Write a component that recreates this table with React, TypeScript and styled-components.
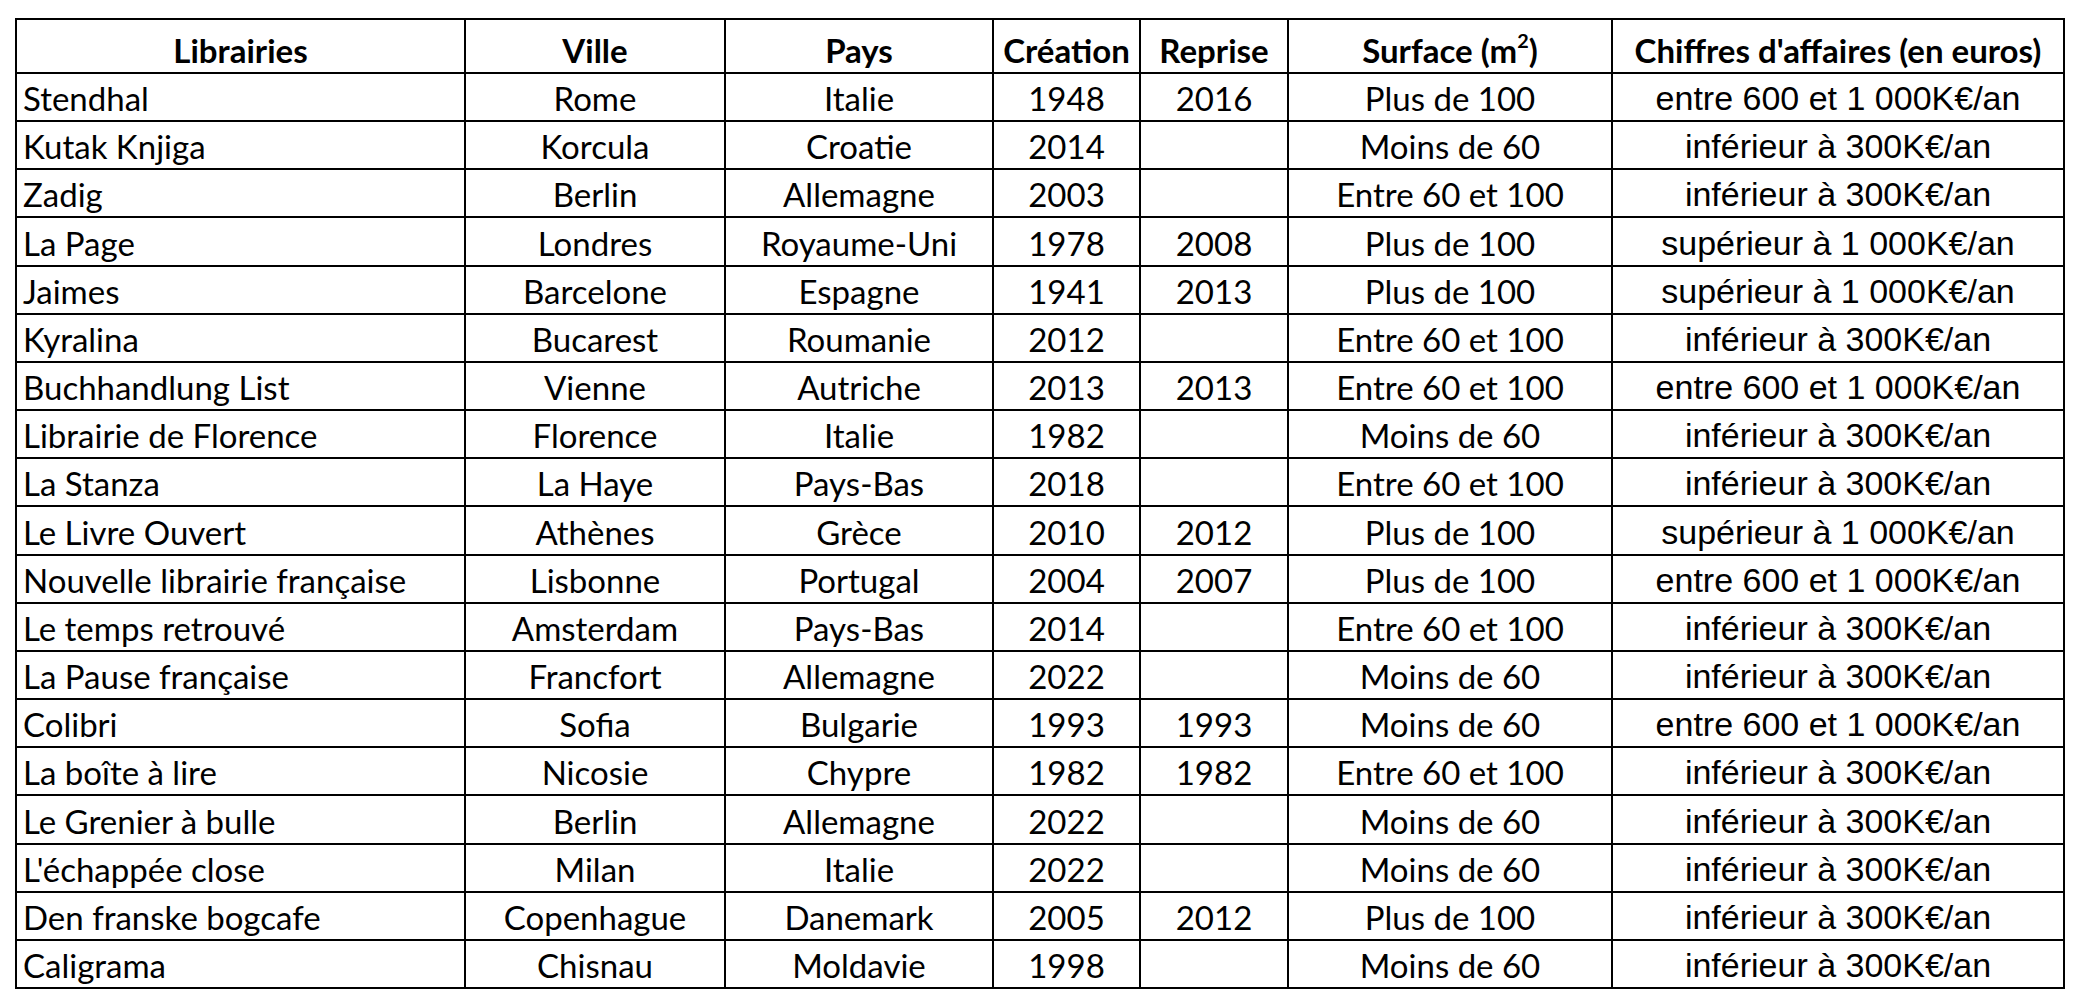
import React from "react";
import styled, { createGlobalStyle } from "styled-components";

const GlobalStyle = createGlobalStyle`
  html, body {
    margin: 0;
    padding: 0;
    background: #ffffff;
  }
  body {
    font-family: Lato, "Noto Sans", sans-serif;
    color: #000;
  }
`;

const Page = styled.div`
  width: 2082px;
  height: 1007px;
  padding: 18px 0 0 15px;
  box-sizing: border-box;
  background: #fff;
`;

const Grid = styled.div`
  display: grid;
  grid-template-columns: 449px 260px 268px 147px 148px 324px 452px;
  grid-template-rows: 54px;
  grid-auto-rows: 48.16px;
  border-left: 2px solid #000;
  border-top: 2px solid #000;
  width: max-content;
`;

const Cell = styled.div<{ $align?: "left" | "center"; $head?: boolean; $arial?: boolean }>`
  box-sizing: border-box;
  border-right: 2px solid #000;
  border-bottom: 2px solid #000;
  display: flex;
  align-items: flex-end;
  justify-content: ${(p) => (p.$align === "left" ? "flex-start" : "center")};
  padding-bottom: 5px;
  padding-left: ${(p) => (p.$align === "left" ? "6px" : "0")};
  font-family: ${(p) =>
    p.$arial ? `"Liberation Sans", Arial, sans-serif` : `Lato, "Noto Sans", sans-serif`};
  font-size: ${(p) => (p.$arial ? "34px" : "33px")};
  font-weight: ${(p) => (p.$head ? 700 : 400)};
  line-height: 1;
  white-space: nowrap;
`;

const Label = styled.span`
  display: inline-block;
`;

const Sup = styled.sup`
  font-size: 0.6em;
  line-height: 0;
  vertical-align: 0.75em;
`;

type Row = [string, string, string, string, string, string, string];

const rows: Row[] = [
  ["Stendhal", "Rome", "Italie", "1948", "2016", "Plus de 100", "entre 600 et 1 000K€/an"],
  ["Kutak Knjiga", "Korcula", "Croatie", "2014", "", "Moins de 60", "inférieur à 300K€/an"],
  ["Zadig", "Berlin", "Allemagne", "2003", "", "Entre 60 et 100", "inférieur à 300K€/an"],
  ["La Page", "Londres", "Royaume-Uni", "1978", "2008", "Plus de 100", "supérieur à 1 000K€/an"],
  ["Jaimes", "Barcelone", "Espagne", "1941", "2013", "Plus de 100", "supérieur à 1 000K€/an"],
  ["Kyralina", "Bucarest", "Roumanie", "2012", "", "Entre 60 et 100", "inférieur à 300K€/an"],
  ["Buchhandlung List", "Vienne", "Autriche", "2013", "2013", "Entre 60 et 100", "entre 600 et 1 000K€/an"],
  ["Librairie de Florence", "Florence", "Italie", "1982", "", "Moins de 60", "inférieur à 300K€/an"],
  ["La Stanza", "La Haye", "Pays-Bas", "2018", "", "Entre 60 et 100", "inférieur à 300K€/an"],
  ["Le Livre Ouvert", "Athènes", "Grèce", "2010", "2012", "Plus de 100", "supérieur à 1 000K€/an"],
  ["Nouvelle librairie française", "Lisbonne", "Portugal", "2004", "2007", "Plus de 100", "entre 600 et 1 000K€/an"],
  ["Le temps retrouvé", "Amsterdam", "Pays-Bas", "2014", "", "Entre 60 et 100", "inférieur à 300K€/an"],
  ["La Pause française", "Francfort", "Allemagne", "2022", "", "Moins de 60", "inférieur à 300K€/an"],
  ["Colibri", "Sofia", "Bulgarie", "1993", "1993", "Moins de 60", "entre 600 et 1 000K€/an"],
  ["La boîte à lire", "Nicosie", "Chypre", "1982", "1982", "Entre 60 et 100", "inférieur à 300K€/an"],
  ["Le Grenier à bulle", "Berlin", "Allemagne", "2022", "", "Moins de 60", "inférieur à 300K€/an"],
  ["L'échappée close", "Milan", "Italie", "2022", "", "Moins de 60", "inférieur à 300K€/an"],
  ["Den franske bogcafe", "Copenhague", "Danemark", "2005", "2012", "Plus de 100", "inférieur à 300K€/an"],
  ["Caligrama", "Chisnau", "Moldavie", "1998", "", "Moins de 60", "inférieur à 300K€/an"],
];

export default function App() {
  return (
    <Page>
      <GlobalStyle />
      <Grid>
        <Cell $head><Label>Librairies</Label></Cell>
        <Cell $head><Label>Ville</Label></Cell>
        <Cell $head><Label>Pays</Label></Cell>
        <Cell $head><Label>Création</Label></Cell>
        <Cell $head><Label>Reprise</Label></Cell>
        <Cell $head>
          <Label>
            Surface (m<Sup>2</Sup>)
          </Label>
        </Cell>
        <Cell $head><Label>Chiffres d'affaires (en euros)</Label></Cell>
        {rows.map((r, i) => (
          <React.Fragment key={i}>
            <Cell $align="left"><Label>{r[0]}</Label></Cell>
            <Cell><Label>{r[1]}</Label></Cell>
            <Cell><Label>{r[2]}</Label></Cell>
            <Cell><Label>{r[3]}</Label></Cell>
            <Cell><Label>{r[4]}</Label></Cell>
            <Cell><Label>{r[5]}</Label></Cell>
            <Cell $arial><Label>{r[6]}</Label></Cell>
          </React.Fragment>
        ))}
      </Grid>
    </Page>
  );
}
